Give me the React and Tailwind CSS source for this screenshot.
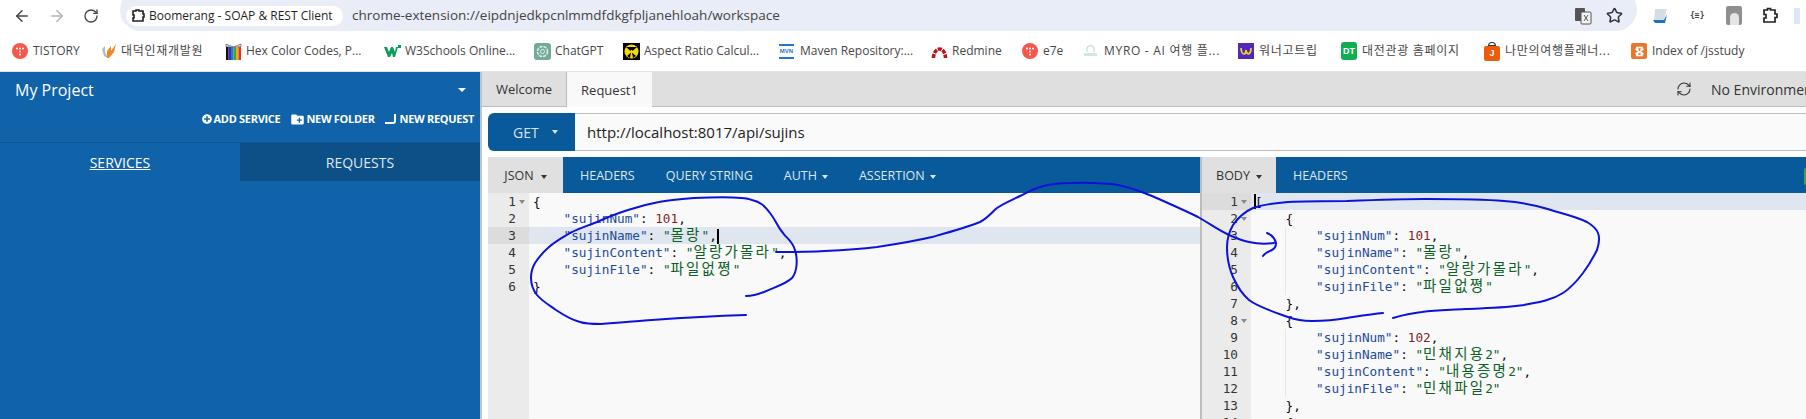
import { ArrowLeft, ArrowRight, RotateCw, Star, RefreshCw } from 'lucide-react'
import { FaPlusCircle } from 'react-icons/fa'
import { MdCreateNewFolder } from 'react-icons/md'

const uiFont = 'font-["Open_Sans","Noto_Sans_CJK_KR",sans-serif]'
const monoFont = 'font-["DejaVu_Sans_Mono","Noto_Sans_CJK_KR",monospace]'

function Tistory() {
  return (
    <svg width="16" height="16" viewBox="0 0 16 16">
      <circle cx="8" cy="8" r="8" fill="#f8564a" />
      <g fill="#fff">
        <circle cx="5" cy="5.5" r="1" />
        <circle cx="8" cy="5.5" r="1" />
        <circle cx="11" cy="5.5" r="1" />
        <circle cx="8" cy="8.5" r="1" />
        <circle cx="8" cy="11.5" r="1" />
      </g>
    </svg>
  )
}

function Daedeok() {
  return (
    <svg width="17" height="17" viewBox="0 0 17 17">
      <path d="M2 6 L5 3 L5 9 L8 15 L4 13 Z" fill="#b9b9b9" />
      <path d="M7 15 L7 8 L11 3 L11 8 L16 1 L14 9 L9 15 Z" fill="#f0862a" />
    </svg>
  )
}

function HexBook() {
  return (
    <svg width="17" height="20" viewBox="0 0 17 20">
      <path d="M1 3 L8.5 6 L16 3 L16 6 L1 6 Z" fill="#cfcfcf" stroke="#555" strokeWidth="0.6" />
      <rect x="1" y="6" width="2.5" height="13" fill="#111" />
      <rect x="3.5" y="6" width="2.5" height="13" fill="#4b22c4" />
      <rect x="6" y="6" width="2.5" height="13" fill="#1b7fd1" />
      <rect x="8.5" y="6" width="2.5" height="13" fill="#35a83a" />
      <rect x="11" y="6" width="2.5" height="13" fill="#f0a81e" />
      <rect x="13.5" y="6" width="2.5" height="13" fill="#dc3322" />
    </svg>
  )
}

function W3() {
  return (
    <svg width="17" height="13" viewBox="0 0 17 13">
      <path d="M0 2 L3 2 L5 7 L7 2 L9 2 L11 7 L12 2 L14 2 L11 12 L9 12 L8 8 L6 12 L4 12 Z" fill="#0a9a5b" />
      <rect x="14" y="0" width="3" height="3" fill="#0a9a5b" />
    </svg>
  )
}

function ChatGpt() {
  return (
    <svg width="17" height="17" viewBox="0 0 17 17">
      <rect width="17" height="17" rx="3" fill="#74aa9c" />
      <circle cx="8.5" cy="8.5" r="5" fill="none" stroke="#e4efec" strokeWidth="1.5" strokeDasharray="3 1" />
      <circle cx="8.5" cy="8.5" r="2" fill="none" stroke="#e4efec" />
    </svg>
  )
}

function AspectRatio() {
  return (
    <svg width="17" height="17" viewBox="0 0 17 17">
      <rect width="17" height="17" fill="#000" />
      <circle cx="8.5" cy="8.5" r="7" fill="#f5d90a" />
      <path d="M3 4 L14 4 L8.5 9 Z M4 13 L8 9.5 L7 15 Z M13 13 L9 9.5 L10 15 Z" fill="#000" />
      <circle cx="8.5" cy="8.5" r="1.6" fill="#f5d90a" />
    </svg>
  )
}

function Maven() {
  return (
    <div className="w-[15px] h-[15px] border-y-2 border-[#2a76c4] flex items-center justify-center">
      <span className="text-[6px] leading-none font-bold text-[#2a76c4] font-['Liberation_Sans']">MVN</span>
    </div>
  )
}

function Redmine() {
  return (
    <svg width="17" height="15" viewBox="0 0 17 15">
      <path d="M2.5 14 A 6 9 0 0 1 14.5 14" fill="none" stroke="#b8161c" strokeWidth="3.6" strokeDasharray="4 1" />
    </svg>
  )
}

function Myro() {
  return (
    <svg width="15" height="13" viewBox="0 0 15 13">
      <path d="M4 7 V4 a3.5 3.5 0 0 1 7 0 V7" fill="none" stroke="#c8dfe8" strokeWidth="1.4" />
      <rect x="1" y="8" width="13" height="3" fill="#cfe6e4" />
    </svg>
  )
}

function Wanner() {
  return (
    <div className="w-4 h-4 bg-[#5128b8] flex items-center justify-center">
      <svg width="12" height="9" viewBox="0 0 12 9">
        <path d="M1 1 Q1.5 7 4 7 Q6 7 6 3 Q6.5 7 8.5 7 Q11 6 11 1" fill="none" stroke="#f5d323" strokeWidth="1.7" />
      </svg>
    </div>
  )
}

function Dt() {
  return (
    <div className="w-4 h-[18px] rounded-[3px] bg-[#0fae50] flex items-center justify-center text-[9px] font-bold leading-none text-white font-['Liberation_Sans']">DT</div>
  )
}

function Suitcase() {
  return (
    <div className="relative w-4 h-[19px] flex items-end">
      <div className="absolute top-0 left-[4px] w-2 h-[4px] border border-[#333] rounded-t-sm" />
      <div className="w-4 h-[15px] rounded-[2px] bg-[#ee5b0c] flex items-center justify-center text-[9px] font-bold leading-none text-white font-['Liberation_Sans']">J</div>
    </div>
  )
}

function Xampp() {
  return (
    <div className="w-4 h-4 rounded-[2px] bg-[#e8792b] flex items-center justify-center">
      <svg width="11" height="11" viewBox="0 0 11 11">
        <path d="M3 1.5 H8 L6.5 5.5 L8 9.5 H3 L4.5 5.5 Z M1.5 3 L9.5 8 M9.5 3 L1.5 8" fill="none" stroke="#fff" strokeWidth="1.6" />
      </svg>
    </div>
  )
}

const bookmarks = [
  { Icon: Tistory, label: 'TISTORY', w: 'w-[88px]' },
  { Icon: Daedeok, label: '대덕인재개발원', w: 'w-[125px]', cjk: true },
  { Icon: HexBook, label: 'Hex Color Codes, P...', w: 'w-[159px]' },
  { Icon: W3, label: 'W3Schools Online...', w: 'w-[150px]' },
  { Icon: ChatGpt, label: 'ChatGPT', w: 'w-[89px]' },
  { Icon: AspectRatio, label: 'Aspect Ratio Calcul...', w: 'w-[156px]' },
  { Icon: Maven, label: 'Maven Repository:...', w: 'w-[152px]' },
  { Icon: Redmine, label: 'Redmine', w: 'w-[91px]' },
  { Icon: Tistory, label: 'e7e', w: 'w-[61px]' },
  { Icon: Myro, label: 'MYRO - AI 여행 플...', w: 'w-[155px]', cjk: true },
  { Icon: Wanner, label: '워너고트립', w: 'w-[103px]', cjk: true },
  { Icon: Dt, label: '대전관광 홈페이지', w: 'w-[143px]', cjk: true },
  { Icon: Suitcase, label: '나만의여행플래너...', w: 'w-[147px]', cjk: true },
  { Icon: Xampp, label: 'Index of /jsstudy', w: 'w-[140px]' },
]

function Toolbar() {
  return (
    <div className="h-[31px] flex items-center overflow-hidden bg-white">
      <div className="w-[120px] flex items-center pl-[13px] gap-[17px] text-[#474747]">
        <ArrowLeft size={18} strokeWidth={2} />
        <ArrowRight size={18} strokeWidth={2} className="text-[#b5b5b5]" />
        <RotateCw size={16} strokeWidth={2} />
      </div>
      <div className="w-[1517px] h-[42px] -mt-[11px] rounded-full bg-[#e9edf7] flex items-center pt-[11px] pl-[6px]">
        <div className="w-[217px] h-[20px] rounded-full bg-white flex items-center pl-[5px] gap-[4px] text-[12px] text-[#1f1f1f]">
          <svg width="14" height="14" viewBox="0 0 14 14">
            <path d="M2 2 H5 V1 H8 V2 H12 V5 H13 V8 H12 V12 H2 V9 H3 V6 H2 Z" fill="none" stroke="#222" strokeWidth="1.6" />
          </svg>
          <span className="whitespace-nowrap">Boomerang - SOAP &amp; REST Client</span>
        </div>
        <span className="ml-[9px] text-[13.5px] text-[#444] whitespace-nowrap">chrome-extension://eipdnjedkpcnlmmdfdkgfpljanehloah/workspace</span>
        <div className="ml-auto mr-[14px] flex items-center gap-[14px]">
          <svg width="18" height="18" viewBox="0 0 18 18">
            <rect x="1" y="1" width="10" height="13" rx="1" fill="#555" />
            <rect x="7" y="5" width="10" height="12" rx="1" fill="#f3f3f3" stroke="#555" />
            <path d="M10 8 L14 14 M14 8 L10 14" stroke="#555" />
          </svg>
          <Star size={17} strokeWidth={2.2} className="text-[#333]" />
        </div>
      </div>
      <div className="flex items-center ml-[15px]">
        <svg width="16" height="16" viewBox="0 0 16 16">
          <path d="M3 1 H15 L12 12 H2 Z" fill="#d7dde6" />
          <path d="M1 12 H12 L15 6 L13 15 H3 Z" fill="#1d6fc0" />
        </svg>
        <span className={`ml-[22px] text-[8px] font-bold text-[#444] ${monoFont}`}>{'{≡}'}</span>
        <div className="ml-[22px] w-4 h-[19px] bg-[#8f8f8f] rounded-[2px] flex items-end justify-center">
          <div className="w-[9px] h-[12px] bg-[#e4e4e4] rounded-t-full" />
        </div>
        <svg className="ml-[20px]" width="16" height="17" viewBox="0 0 16 17">
          <path d="M2 3 H5.5 V1.5 H8.5 V3 H13 V7 H15 V10.5 H13 V15 H2 V11 H4 V7.5 H2 Z" fill="none" stroke="#222" strokeWidth="1.7" />
        </svg>
        <div className="ml-[16px] w-[6px] h-[16px] bg-[#dbe7f9]" />
      </div>
    </div>
  )
}

function BookmarkBar() {
  return (
    <div className={`h-[41px] flex items-center pl-[12px] bg-white border-b border-[#e3e3e3] text-[12px] text-[#474747] ${uiFont}`}>
      {bookmarks.map((b) => (
        <div key={b.label} className={`${b.w} shrink-0 flex items-center whitespace-nowrap`}>
          <div className="w-[21px] flex items-center"><b.Icon /></div>
          <span className={b.cjk ? 'tracking-[0.7px]' : ''}>{b.label}</span>
        </div>
      ))}
    </div>
  )
}

function Sidebar() {
  return (
    <aside className={`w-[480px] shrink-0 bg-[#1063a8] text-white ${uiFont}`}>
      <div className="h-[71px] border-b border-[#0d5693]">
        <div className="h-[36px] flex items-center justify-between pl-[15px] pr-[14px] text-[16px]">
          <span>My Project</span>
          <span className="w-0 h-0 border-x-[4px] border-x-transparent border-t-[4px] border-t-white" />
        </div>
        <div className="flex items-center justify-end gap-[10px] pr-[6px] pt-[3px] text-[11px] tracking-[-0.3px] font-bold">
          <span className="flex items-center gap-[2px]"><FaPlusCircle size={10} />ADD SERVICE</span>
          <span className="flex items-center gap-[1px]"><MdCreateNewFolder size={15} />NEW FOLDER</span>
          <span className="flex items-center gap-[4px]">
            <svg width="11" height="10" viewBox="0 0 11 10">
              <path d="M0 9 H8 Q10 9 10 7 V0" fill="none" stroke="#fff" strokeWidth="2" />
            </svg>
            NEW REQUEST
          </span>
        </div>
      </div>
      <div className="flex h-[38px] text-[14px]">
        <div className="w-[240px] flex items-center justify-center underline">SERVICES</div>
        <div className="w-[240px] flex items-center justify-center bg-[#0d5088] text-[#dfe8f0]">REQUESTS</div>
      </div>
    </aside>
  )
}

function Caret({ className }) {
  return <span className={`inline-block w-0 h-0 border-x-[3.5px] border-x-transparent border-t-[4px] ${className}`} />
}

function CodeLine({ text }) {
  // split the line into key / number / string pieces, dawn theme colours
  const parts = text.split(/("[^"]*"(?=:)|"[^"]*"|\b\d+\b(?!"))/)
  return parts.map((p, i) => {
    if (p.startsWith('"') && parts[i + 1]?.startsWith(':')) return <span key={i} className="text-[#234a97]">{p}</span>
    if (p.startsWith('"')) {
      return (
        <span key={i} className="text-[#0b6125]">
          {p.split(/([가-힣]+)/).map((s, j) =>
            /[가-힣]/.test(s) ? <span key={j} className="text-[14.5px] tracking-[2.2px]">{s}</span> : s
          )}
        </span>
      )
    }
    if (/^\d+$/.test(p)) return <span key={i} className="text-[#811f24]">{p}</span>
    return <span key={i}>{p}</span>
  })
}

function Editor({ lines, gutter, active, foldable, guides, cursor, startCursor }) {
  return (
    <div className={`flex-1 flex min-h-0 overflow-hidden bg-[#f9f9f9] text-[12.7px] text-[#080808] ${monoFont}`}>
      <div className={`${gutter} shrink-0 bg-[#ebebeb] text-[#333]`}>
        {lines.map((_, i) => (
          <div key={i} className={`h-[17px] leading-[17px] flex items-center justify-end pr-[13px] relative ${active === i ? 'bg-[#dcdcdc]' : ''}`}>
            {i + 1}
            {foldable.includes(i) && <Caret className="absolute right-[4px] top-[7px] border-t-[#888]" />}
          </div>
        ))}
      </div>
      <div className="flex-1 relative">
        {lines.map((l, i) => (
          <div key={i} className={`h-[17px] leading-[17px] pl-[4px] whitespace-pre relative ${active === i ? 'bg-[#dfe6f0]' : ''}`}>
            {guides.includes(i) && <span className="absolute left-[34px] top-0 h-[17px] border-l border-[#e6e6e0]" />}
            {startCursor && i === 0 && <span className="absolute left-[3px] top-[1px] w-[2px] h-[15px] bg-black" />}
            <CodeLine text={l} />
            {cursor === i && <span className="inline-block w-[2px] h-[15px] bg-black align-middle" />}
          </div>
        ))}
      </div>
    </div>
  )
}

const requestBody = [
  '{',
  '    "sujinNum": 101,',
  '    "sujinName": "몰랑",',
  '    "sujinContent": "알랑가몰라",',
  '    "sujinFile": "파일없쪙"',
  '}',
]

const responseBody = [
  '[',
  '    {',
  '        "sujinNum": 101,',
  '        "sujinName": "몰랑",',
  '        "sujinContent": "알랑가몰라",',
  '        "sujinFile": "파일없쪙"',
  '    },',
  '    {',
  '        "sujinNum": 102,',
  '        "sujinName": "민채지용2",',
  '        "sujinContent": "내용증명2",',
  '        "sujinFile": "민채파일2"',
  '    },',
  '    {',
]

function Workspace() {
  return (
    <main className={`flex-1 min-w-0 flex flex-col bg-white border-l-2 border-[#c4c4c4] ${uiFont}`}>
      <div className="h-[35px] shrink-0 flex bg-[#dfdfdf] border-b border-[#bdbdbd] text-[13px] text-[#333]">
        <div className="w-[85px] pt-[2px] flex items-center justify-center border-r border-[#bdbdbd]">Welcome</div>
        <div className="w-[85px] h-[35px] pt-[2px] flex items-center justify-center bg-[#f9f9f9]">Request1</div>
        <div className="ml-auto flex items-center whitespace-nowrap text-[14px]">
          <RefreshCw size={16} strokeWidth={1.6} className="mr-[19px] text-[#333]" />
          <span className="w-[95px] overflow-hidden">No Environment</span>
        </div>
      </div>
      <div className="h-[50px] shrink-0 flex items-start pl-[6px] pt-[6px]">
        <div className="flex-1 flex h-[38px]">
          <div className="w-[87px] shrink-0 rounded-l-md bg-[#085a9a] text-[#d6e3ee] text-[14px] flex items-center pl-[25px] gap-[13px]">
            GET <Caret className="border-t-[#d6e3ee]" />
          </div>
          <div className="flex-1 bg-[#fafafa] border-y border-[#bdbdbd] flex items-center pl-[12px] text-[15px] text-[#222]">http://localhost:8017/api/sujins</div>
        </div>
      </div>
      <div className="flex-1 min-h-0 flex pl-[6px] bg-white">
        <section className="w-[712px] shrink-0 flex flex-col min-h-0">
          <div className="h-[36px] shrink-0 flex items-center pt-[3px] bg-[#085a9a] text-[12.5px] text-[#dce7f0]">
            <div className="w-[75px] h-[36px] -mt-[3px] pt-[3px] flex items-center justify-center gap-[7px] bg-[#e0e0e0] text-[#333]">JSON <Caret className="border-t-[#333]" /></div>
            <span className="ml-[17px]">HEADERS</span>
            <span className="ml-[31px]">QUERY STRING</span>
            <span className="ml-[31px] flex items-center gap-[5px]">AUTH <Caret className="border-t-[#dce7f0]" /></span>
            <span className="ml-[31px] flex items-center gap-[5px]">ASSERTION <Caret className="border-t-[#dce7f0]" /></span>
          </div>
          <Editor lines={requestBody} gutter="w-[41px]" active={2} foldable={[0]} guides={[]} cursor={2} />
        </section>
        <section className="flex-1 min-w-0 flex flex-col min-h-0 border-l-2 border-[#bdbdbd]">
          <div className="h-[36px] shrink-0 flex items-center pt-[3px] bg-[#085a9a] text-[12.5px] text-[#dce7f0]">
            <div className="w-[74px] h-[36px] -mt-[3px] pt-[3px] flex items-center justify-center gap-[6px] bg-[#e0e0e0] text-[#333]">BODY <Caret className="border-t-[#333]" /></div>
            <span className="ml-[17px]">HEADERS</span>
            <span className="ml-auto w-[2px] h-[17px] rounded-l-sm bg-[#3ba53f]" />
          </div>
          <Editor lines={responseBody} gutter="w-[49px]" active={0} foldable={[0, 1, 7]} guides={[2, 3, 4, 5, 8, 9, 10, 11]} startCursor />
        </section>
      </div>
    </main>
  )
}

// the pen marks drawn on top of the screenshot
function PenMarks() {
  return (
    <svg className="absolute inset-0 pointer-events-none" width="1806" height="419" viewBox="0 0 1806 419" fill="none" stroke="#0b12dc" strokeWidth="2" strokeLinecap="round" strokeLinejoin="round">
      <path d="M746 296 C752 296 759 294 764 292 C775 287 786 284 792 278 C797 272 798 260 795 250 C792 240 786 238 783 233 C777 226 777 222 770 213 C764 205 760 202 752 200 C742 196 715 197 694 198 C680 199 668 200 659 202 C648 204 640 206 628 210 C615 214 608 217 597 222 C587 226 580 228 570 233 C562 238 556 241 549 247 C542 253 539 257 535 263 C532 268 531 272 531 278 C531 285 533 290 537 295 C542 301 549 305 556 310 C565 316 572 320 580 322 C586 324 594 324 601 324 C620 323 635 321 652 320 C680 318 715 316 746 315" />
      <path d="M776 252 C795 252 810 252 825 251 C845 250 860 249 877 247 C897 244 915 241 932 237 C950 232 965 228 980 222 C988 218 992 212 997 208 C1004 203 1012 200 1020 196 C1028 192 1031 190 1037 188 C1048 184 1058 183 1071 183 C1085 182 1098 183 1112 184 C1128 186 1140 191 1152 196 C1168 203 1184 210 1198 217 C1212 225 1218 230 1229 235 C1238 239 1244 241 1249 242 C1258 244 1266 244 1274 243" />
      <path d="M1267 233 C1272 235 1275 239 1276 243 C1276 247 1274 249 1272 250 C1268 252 1265 253 1263 256" />
      <path d="M1393 318 C1403 315 1412 313 1422 312 C1436 310 1450 310 1465 309 C1485 308 1505 308 1524 305 C1540 302 1552 300 1563 293 C1572 287 1577 281 1583 273 C1589 265 1593 258 1597 250 C1599 244 1600 238 1598 233 C1596 228 1592 225 1587 222 C1575 216 1560 213 1544 208 C1530 204 1518 202 1504 201 C1480 199 1452 199 1426 199 C1400 199 1373 200 1347 201 C1327 201 1307 201 1288 202 C1275 203 1262 205 1253 208 C1244 212 1238 218 1233 225 C1229 232 1227 239 1227 247 C1227 258 1229 268 1233 277 C1237 286 1242 294 1249 300 C1258 307 1274 312 1288 317 C1296 320 1304 321 1312 321 C1324 321 1336 320 1347 318 C1360 316 1372 314 1383 313" />
    </svg>
  )
}

export default function App() {
  return (
    <div className={`relative w-[1806px] h-[419px] overflow-hidden bg-white ${uiFont}`}>
      <Toolbar />
      <BookmarkBar />
      <div className="flex h-[347px]">
        <Sidebar />
        <Workspace />
      </div>
      <PenMarks />
    </div>
  )
}
